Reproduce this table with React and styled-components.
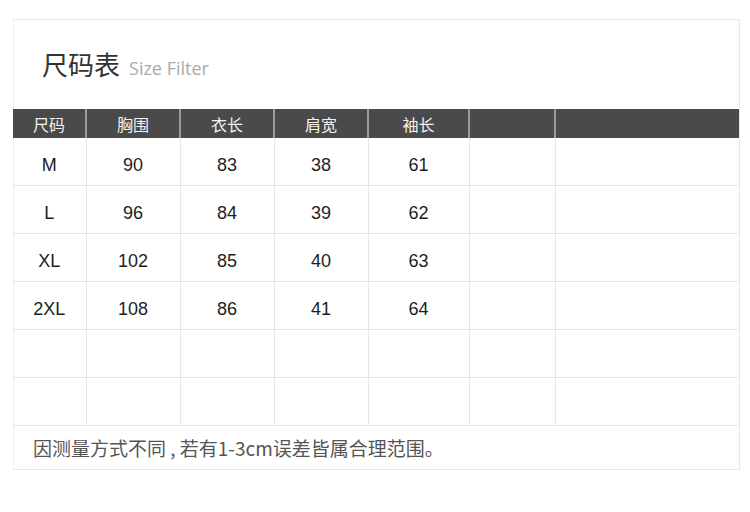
import styled, { createGlobalStyle } from "styled-components";

const GlobalStyle = createGlobalStyle`
  html, body {
    margin: 0;
    padding: 0;
    background: #fff;
  }
`;

const columns = [
  { title: "尺码", width: 73 },
  { title: "胸围", width: 94 },
  { title: "衣长", width: 94 },
  { title: "肩宽", width: 94 },
  { title: "袖长", width: 101 },
  { title: "", width: 86 },
  { title: "", width: 184 },
];

const rows = [
  ["M", "90", "83", "38", "61", "", ""],
  ["L", "96", "84", "39", "62", "", ""],
  ["XL", "102", "85", "40", "63", "", ""],
  ["2XL", "108", "86", "41", "64", "", ""],
  ["", "", "", "", "", "", ""],
  ["", "", "", "", "", "", ""],
];

export default function App() {
  return (
    <Page>
      <GlobalStyle />
      <Card>
        <TitleBar>
          <Title>尺码表</Title>
          <SubTitle>Size Filter</SubTitle>
        </TitleBar>
        <SizeTable>
          <colgroup>
            {columns.map((col, i) => (
              <col key={i} style={{ width: col.width }} />
            ))}
          </colgroup>
          <thead>
            <tr>
              {columns.map((col, i) => (
                <HeadCell key={i}>{col.title}</HeadCell>
              ))}
            </tr>
          </thead>
          <tbody>
            {rows.map((row, r) => (
              <tr key={r}>
                {row.map((val, c) => (
                  <Cell key={c}>{val}</Cell>
                ))}
              </tr>
            ))}
          </tbody>
        </SizeTable>
        <Note>因测量方式不同 , 若有1-3cm误差皆属合理范围。</Note>
      </Card>
    </Page>
  );
}

const Page = styled.div`
  padding: 19px 0 0 13px;
  width: 750px;
  height: 512px;
  box-sizing: border-box;
`;

const Card = styled.div`
  width: 727px;
  box-sizing: border-box;
  border: 1px solid #e6e6e6;
  border-left-color: #eeeeee;
`;

const TitleBar = styled.div`
  height: 89px;
  display: flex;
  align-items: baseline;
  padding: 27px 0 0 28px;
  box-sizing: border-box;
`;

const Title = styled.span`
  font-family: "Noto Sans CJK SC", sans-serif;
  font-size: 26px;
  color: #333;
  line-height: 34px;
`;

const SubTitle = styled.span`
  font-family: "Open Sans", "Liberation Sans", sans-serif;
  font-size: 18px;
  color: #aaaaaa;
  margin-left: 9px;
`;

const SizeTable = styled.table`
  table-layout: fixed;
  border-collapse: collapse;
  margin-left: -1px;
  width: calc(100% + 1px);
`;

const HeadCell = styled.th`
  height: 29px;
  padding: 0;
  background: #4a4a4a;
  color: #f2f2f2;
  font-family: "Noto Sans CJK SC", sans-serif;
  font-size: 16px;
  font-weight: normal;
  text-align: center;
  border-left: 2px solid #9a9a9a;
  &:first-child {
    border-left: none;
  }
`;

const Cell = styled.td`
  height: 40px;
  padding: 7px 0 0;
  box-sizing: content-box;
  text-align: center;
  font-family: "Liberation Sans", Arial, sans-serif;
  font-size: 18px;
  color: #1e1e1e;
  border-left: 1px solid #e6e6e6;
  border-bottom: 1px solid #e6e6e6;
  &:first-child {
    border-left: none;
  }
`;

const Note = styled.div`
  height: 43px;
  display: flex;
  align-items: center;
  padding-left: 19px;
  font-family: "Noto Sans CJK SC", sans-serif;
  font-size: 19px;
  color: #555;
`;
